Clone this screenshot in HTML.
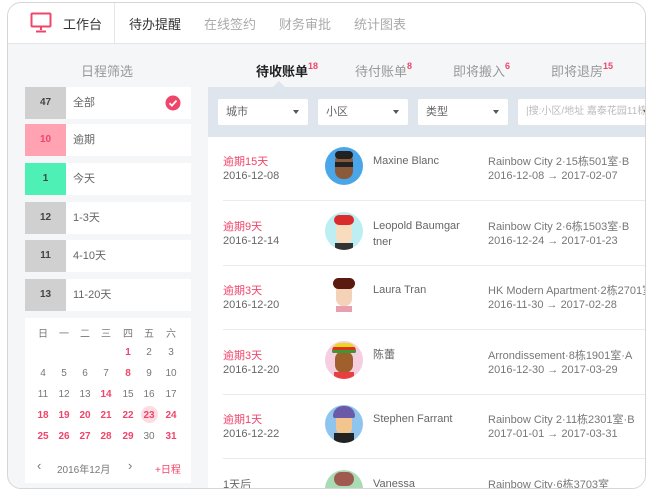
<!DOCTYPE html>
<html><head><meta charset="utf-8"><style>
*{margin:0;padding:0;box-sizing:border-box}
body{width:650px;height:496px;background:#fff;font-family:"Liberation Sans","Noto Sans CJK SC",sans-serif;position:relative;overflow:hidden;color:#555}
.frame{position:absolute;left:7px;top:2px;width:639px;height:487px;border:1px solid #d6d6d6;border-radius:14px;overflow:hidden;background:#f5f6f8}
.a{position:absolute;white-space:nowrap}
.hdr{position:absolute;left:0;top:0;width:100%;height:41px;background:#fff;border-bottom:1px solid #e2e4e8;z-index:2}
.nav{font-size:13px;top:11px}
.tab{font-size:13px;color:#999;top:58px}
.tab sup{color:#f0456a;font-size:9px;font-weight:bold;position:relative;top:-2px}
.item{position:absolute;left:17px;width:166px;height:32px;background:#fff}
.item .n{position:absolute;left:0;top:0;width:41px;height:32px;background:#d0d0d0;font-size:10px;font-weight:bold;color:#444;text-align:center;line-height:32px}
.item .t{position:absolute;left:48px;top:0;line-height:32px;font-size:11px;color:#666}
.cal{position:absolute;left:17px;top:315px;width:166px;height:165px;background:#fff}
.cal span{position:absolute;width:22px;text-align:center;font-size:10px;color:#777}
.cal .r{color:#f0456a;font-weight:bold}
.fb{position:absolute;left:200px;top:84px;width:440px;height:50px;background:#dfe5ec}
.sel{position:absolute;top:12px;height:26px;background:#fff;border-radius:2px;font-size:11px;color:#666;padding-left:8px;line-height:26px;white-space:nowrap;overflow:hidden}
.sel:after{content:"";position:absolute;right:9px;top:11px;border:3.5px solid transparent;border-top:4px solid #555}
.list{position:absolute;left:200px;top:134px;width:440px;height:352px;background:#fff;overflow:hidden}
.row{position:absolute;left:0;width:440px;height:64px}
.row .sep{position:absolute;left:15px;right:0;bottom:0;height:1px;background:#ebebeb}
.row .s{position:absolute;left:15px;top:16px;font-size:11px;color:#f0456a}
.row .d{position:absolute;left:15px;top:33px;font-size:11px;color:#666}
.row .nm{position:absolute;left:165px;top:16px;font-size:11px;color:#666;line-height:16px;width:90px;white-space:normal}
.row .p,.row .q{position:absolute;left:280px;font-size:11px;color:#777;white-space:nowrap}
.row .p{top:16px}.row .q{top:33px}
.av{position:absolute;left:117px;top:10px;width:38px;height:38px;border-radius:50%;overflow:hidden}
</style></head><body>
<div class="frame">
 <div class="hdr">
  <svg class="a" style="left:22px;top:9px" width="22" height="22" viewBox="0 0 22 22"><rect x="1.5" y="1.5" width="19" height="13" rx="1" fill="none" stroke="#f0456a" stroke-width="2"/><path d="M11 15v3M6 19.5h10" stroke="#f0456a" stroke-width="2"/></svg>
  <div class="a nav" style="left:55px;color:#333">工作台</div>
  <div class="a" style="left:106px;top:0;width:1px;height:41px;background:#e6e6e6"></div>
  <div class="a nav" style="left:121px;color:#333">待办提醒</div>
  <div class="a nav" style="left:196px;color:#aaa">在线签约</div>
  <div class="a nav" style="left:271px;color:#aaa">财务审批</div>
  <div class="a nav" style="left:346px;color:#aaa">统计图表</div>
 </div>
 <div class="a tab" style="left:73px">日程筛选</div>
 <div class="a tab" style="left:248px;color:#222;font-weight:bold">待收账单<sup>18</sup></div>
 <div class="a tab" style="left:347px">待付账单<sup>8</sup></div>
 <div class="a tab" style="left:445px">即将搬入<sup>6</sup></div>
 <div class="a tab" style="left:543px">即将退房<sup>15</sup></div>
 <div class="item" style="top:84px"><div class="n">47</div><div class="t">全部</div>
  <svg class="a" style="left:140px;top:8px" width="16" height="16"><circle cx="8" cy="8" r="7.5" fill="#f0456a"/><path d="M4.5 8.2l2.4 2.4 4.6-5" stroke="#fff" stroke-width="1.8" fill="none"/></svg></div>
 <div class="item" style="top:121px"><div class="n" style="background:#ffa2b1;color:#f0456a">10</div><div class="t">逾期</div></div>
 <div class="item" style="top:160px"><div class="n" style="background:#4ff0b6">1</div><div class="t">今天</div></div>
 <div class="item" style="top:199px"><div class="n">12</div><div class="t">1-3天</div></div>
 <div class="item" style="top:237px"><div class="n">11</div><div class="t">4-10天</div></div>
 <div class="item" style="top:276px"><div class="n">13</div><div class="t">11-20天</div></div>
 <div class="cal">
  <span style="left:7px;top:7px">日</span><span style="left:28px;top:7px">一</span><span style="left:49px;top:7px">二</span><span style="left:70px;top:7px">三</span><span style="left:92px;top:7px">四</span><span style="left:113px;top:7px">五</span><span style="left:135px;top:7px">六</span>
  <span class="r" style="left:92px;top:29px">1</span><span style="left:113px;top:29px">2</span><span style="left:135px;top:29px">3</span>
  <span style="left:7px;top:50px">4</span><span style="left:28px;top:50px">5</span><span style="left:49px;top:50px">6</span><span style="left:70px;top:50px">7</span><span class="r" style="left:92px;top:50px">8</span><span style="left:113px;top:50px">9</span><span style="left:135px;top:50px">10</span>
  <span style="left:7px;top:71px">11</span><span style="left:28px;top:71px">12</span><span style="left:49px;top:71px">13</span><span class="r" style="left:70px;top:71px">14</span><span style="left:92px;top:71px">15</span><span style="left:113px;top:71px">16</span><span style="left:135px;top:71px">17</span>
  <div class="a" style="left:116px;top:88px;width:17px;height:17px;border-radius:50%;background:#fbdde3"></div>
  <span class="r" style="left:7px;top:92px">18</span><span class="r" style="left:28px;top:92px">19</span><span class="r" style="left:49px;top:92px">20</span><span class="r" style="left:70px;top:92px">21</span><span class="r" style="left:92px;top:92px">22</span><span class="r" style="left:113px;top:92px">23</span><span class="r" style="left:135px;top:92px">24</span>
  <span class="r" style="left:7px;top:113px">25</span><span class="r" style="left:28px;top:113px">26</span><span class="r" style="left:49px;top:113px">27</span><span class="r" style="left:70px;top:113px">28</span><span class="r" style="left:92px;top:113px">29</span><span style="left:113px;top:113px">30</span><span class="r" style="left:135px;top:113px">31</span>
  <span style="left:12px;top:140px;width:auto;font-size:13px">‹</span><span style="left:32px;top:143px;width:auto">2016年12月</span><span style="left:103px;top:140px;width:auto;font-size:13px">›</span><span style="left:130px;top:143px;width:auto;color:#f0456a">+日程</span>
 </div>
 <div class="a" style="left:265px;top:72px;width:0;height:0;border:6px solid transparent;border-bottom-color:#dfe5ec"></div>
 <div class="fb">
  <div class="sel" style="left:10px;width:90px">城市</div>
  <div class="sel" style="left:110px;width:90px">小区</div>
  <div class="sel" style="left:210px;width:90px">类型</div>
  <div class="sel" style="left:310px;width:140px;color:#bbb;font-size:10px">|搜:小区/地址 嘉泰花园11栋</div>
 </div>
 <div class="list">
  <div class="row" style="top:0"><div class="s">逾期15天</div><div class="d">2016-12-08</div>
   <div class="av" style="background:#4aa6e8"><div class="a" style="left:10px;top:6px;width:18px;height:26px;border-radius:8px;background:#8a5a3a"></div><div class="a" style="left:10px;top:4px;width:18px;height:8px;border-radius:4px;background:#222"></div><div class="a" style="left:10px;top:15px;width:18px;height:5px;background:#222"></div></div>
   <div class="nm">Maxine Blanc</div><div class="p">Rainbow City 2·15栋501室·B</div><div class="q">2016-12-08 → 2017-02-07</div><div class="sep"></div></div>
  <div class="row" style="top:65px"><div class="s">逾期9天</div><div class="d">2016-12-14</div>
   <div class="av" style="background:#bdeef3"><div class="a" style="left:11px;top:8px;width:16px;height:24px;border-radius:7px;background:#f7dcc0"></div><div class="a" style="left:9px;top:3px;width:20px;height:10px;border-radius:6px;background:#d92c2c"></div><div class="a" style="left:10px;top:31px;width:18px;height:8px;background:#333"></div></div>
   <div class="nm">Leopold Baumgar tner</div><div class="p">Rainbow City 2·6栋1503室·B</div><div class="q">2016-12-24 → 2017-01-23</div><div class="sep"></div></div>
  <div class="row" style="top:129px"><div class="s">逾期3天</div><div class="d">2016-12-20</div>
   <div class="av"><div class="a" style="left:11px;top:8px;width:16px;height:22px;border-radius:7px;background:#f4d2b8"></div><div class="a" style="left:8px;top:2px;width:22px;height:11px;border-radius:8px;background:#5a1a10"></div><div class="a" style="left:11px;top:30px;width:16px;height:6px;background:#e8a0b0"></div></div>
   <div class="nm">Laura Tran</div><div class="p">HK Modern Apartment·2栋2701室·</div><div class="q">2016-11-30 → 2017-02-28</div><div class="sep"></div></div>
  <div class="row" style="top:194px"><div class="s">逾期3天</div><div class="d">2016-12-20</div>
   <div class="av" style="background:#f5cfe0"><div class="a" style="left:10px;top:10px;width:18px;height:22px;border-radius:8px;background:#a0602e"></div><div class="a" style="left:7px;top:2px;width:24px;height:10px;border-radius:10px 10px 2px 2px;background:linear-gradient(#e8d820 40%,#e03020 40%,#e03020 70%,#3a9a30 70%)"></div><div class="a" style="left:9px;top:31px;width:20px;height:7px;background:#e84040"></div></div>
   <div class="nm">陈蕾</div><div class="p">Arrondissement·8栋1901室·A</div><div class="q">2016-12-30 → 2017-03-29</div><div class="sep"></div></div>
  <div class="row" style="top:258px"><div class="s">逾期1天</div><div class="d">2016-12-22</div>
   <div class="av" style="background:#8fc4ef"><div class="a" style="left:11px;top:9px;width:16px;height:20px;border-radius:6px;background:#f2c58e"></div><div class="a" style="left:8px;top:1px;width:22px;height:12px;border-radius:10px 10px 2px 2px;background:#6a5aa8"></div><div class="a" style="left:9px;top:28px;width:20px;height:10px;background:#222"></div></div>
   <div class="nm">Stephen Farrant</div><div class="p">Rainbow City 2·11栋2301室·B</div><div class="q">2017-01-01 → 2017-03-31</div><div class="sep"></div></div>
  <div class="row" style="top:323px"><div class="s" style="color:#666">1天后</div>
   <div class="av" style="background:#a9dcb4"><div class="a" style="left:9px;top:2px;width:20px;height:14px;border-radius:8px;background:#a05a50"></div></div>
   <div class="nm">Vanessa</div><div class="p">Rainbow City·6栋3703室</div></div>
 </div>
</div>
</body></html>
